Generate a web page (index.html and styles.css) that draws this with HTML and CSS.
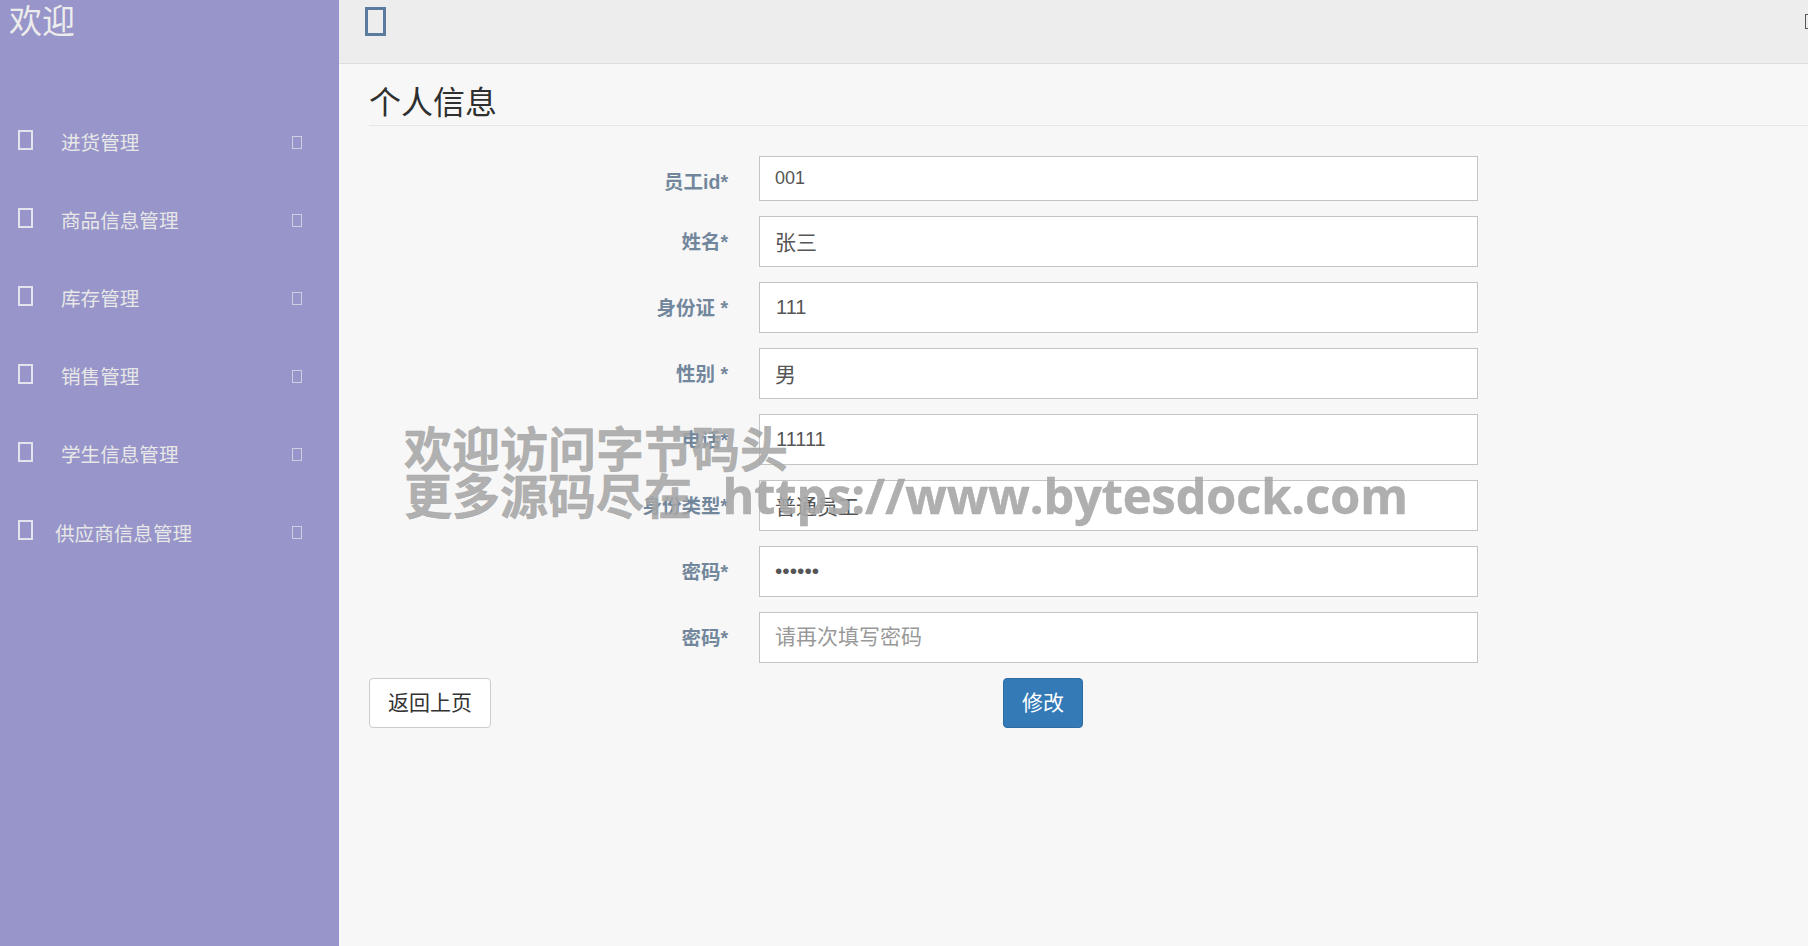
FILE: index.html
```html
<!DOCTYPE html>
<html lang="zh-CN">
<head>
<meta charset="utf-8">
<title>个人信息</title>
<link rel="stylesheet" href="styles.css">
</head>
<body>
<div class="app">
  <aside class="sidebar">
    <div class="brand">欢迎</div>
    <nav class="menu">
      <a class="menu-item"><span class="tofu"></span><span class="menu-text">进货管理</span><span class="chev"></span></a>
      <a class="menu-item"><span class="tofu"></span><span class="menu-text">商品信息管理</span><span class="chev"></span></a>
      <a class="menu-item"><span class="tofu"></span><span class="menu-text">库存管理</span><span class="chev"></span></a>
      <a class="menu-item"><span class="tofu"></span><span class="menu-text">销售管理</span><span class="chev"></span></a>
      <a class="menu-item"><span class="tofu"></span><span class="menu-text">学生信息管理</span><span class="chev"></span></a>
      <a class="menu-item"><span class="tofu"></span><span class="menu-text menu-text-wide">供应商信息管理</span><span class="chev"></span></a>
    </nav>
  </aside>
  <main class="main">
    <header class="topbar">
      <span class="toggle"></span>
      <span class="user-icon"></span>
    </header>
    <section class="content">
      <h1 class="page-title">个人信息</h1>
      <form class="form">
        <div class="row row-first"><label class="label label-low">员工id*</label><input class="field field-latin" type="text" value="001"></div>
        <div class="row"><label class="label">姓名*</label><input class="field" type="text" value="张三"></div>
        <div class="row"><label class="label">身份证 *</label><input class="field field-ones" type="text" value="111"></div>
        <div class="row"><label class="label">性别 *</label><input class="field" type="text" value="男"></div>
        <div class="row"><label class="label">电话*</label><input class="field field-ones" type="text" value="11111"></div>
        <div class="row"><label class="label">身份类型*</label><input class="field" type="text" value="普通员工"></div>
        <div class="row"><label class="label">密码*</label><input class="field" type="password" value="123456"></div>
        <div class="row"><label class="label">密码*</label><input class="field" type="password" placeholder="请再次填写密码"></div>
        <div class="actions">
          <button class="btn btn-back" type="button">返回上页</button>
          <button class="btn btn-primary" type="button">修改</button>
        </div>
      </form>
    </section>
  </main>
</div>
<div class="watermark">欢迎访问字节码头<br>更多源码尽在 <span class="watermark-url">https://www.bytesdock.com</span></div>
</body>
</html>
```
FILE: styles.css
```css
* { box-sizing: border-box; }
html, body { margin: 0; height: 100%; overflow: hidden; }
body {
  font-family: "Liberation Sans", "Noto Sans CJK SC", sans-serif;
  background: #f7f7f7;
  color: #333;
}
.app { display: flex; height: 946px; }

.sidebar { width: 339px; flex: none; background: #9795c9; color: #eee; }
.brand { font-size: 33px; line-height: 40px; padding: 2px 0 0 9px; height: 42px; color: #ececec; }
.menu { display: flex; flex-direction: column; padding: 88px 18px 0 18px; }
.menu-item { display: flex; height: 78px; color: #e7e7e7; }
.tofu { width: 15px; height: 20px; border: 2.5px solid #e3e3ee; flex: none; }
.menu-text { font-size: 19.6px; line-height: 24px; margin: 1px 0 0 28px; flex: 1; white-space: nowrap; }
.menu-text-wide { margin: 2px 0 0 22px; }
.chev { width: 10px; height: 13px; border: 1px solid #cfcfe4; margin: 6px 19px 0 0; flex: none; }

.main { flex: 1; min-width: 0; display: flex; flex-direction: column; }
.topbar {
  height: 64px; flex: none; background: #ededed; border-bottom: 1px solid #dedede;
  display: flex; justify-content: space-between; padding: 7px 0 0 26px; position: relative;
}
.toggle { width: 21px; height: 29px; border: 3.5px solid #5a7a9e; }
.user-icon { width: 8px; height: 15px; border: 1.5px solid #555; margin-top: 7px; margin-right: -5px; }

.content { padding: 0 0 0 30px; flex: 1; }
.page-title {
  margin: 0 0 30px; height: 62px; padding-top: 19px; font-size: 32px; line-height: 40px;
  font-weight: 400; color: #2f2f2f; border-bottom: 1px solid #e6e6e6;
}

.form { display: flex; flex-direction: column; gap: 15px; }
.row { display: grid; grid-template-columns: 360px 719px; column-gap: 30px; align-items: center; height: 51px; }
.row-first { height: 45px; }
.label {
  font-size: 19.5px; font-weight: 700; color: #73879c; text-align: right; white-space: nowrap;
  padding: 0 1px 2px 0;
}
.label-low { position: relative; top: 3px; }
.field {
  width: 100%; height: 100%; border: 1px solid #c4c4c4; background: #fff; padding: 0 15px 2px;
  font: 21px "Liberation Sans", "Noto Sans CJK SC", sans-serif; color: #555; outline: none;
}
.field-latin { font-size: 18px; padding-bottom: 0; }
.field-ones { font-size: 20px; padding: 0 15px 0 16px; }
.field::placeholder { color: #999; opacity: 1; }

.actions { display: flex; }
.btn {
  height: 50px; padding: 0 18px 4px; border: 1px solid #ccc; border-radius: 4px; background: #fff;
  font: 21px "Liberation Sans", "Noto Sans CJK SC", sans-serif; color: #333;
}
.btn-primary { margin-left: 512px; background: #337ab7; border-color: #2e6da4; color: #fff; }

.watermark {
  position: absolute; left: 404px; top: 425px; font-family: "Open Sans", "Noto Sans CJK SC", sans-serif;
  font-weight: 700; font-size: 48px; line-height: 47px; color: rgba(166,166,166,.9);
  white-space: nowrap; pointer-events: none; word-spacing: 18px; -webkit-text-stroke: .5px rgba(166,166,166,.9);
}
.watermark-url { font-size: 48.5px; }
```
